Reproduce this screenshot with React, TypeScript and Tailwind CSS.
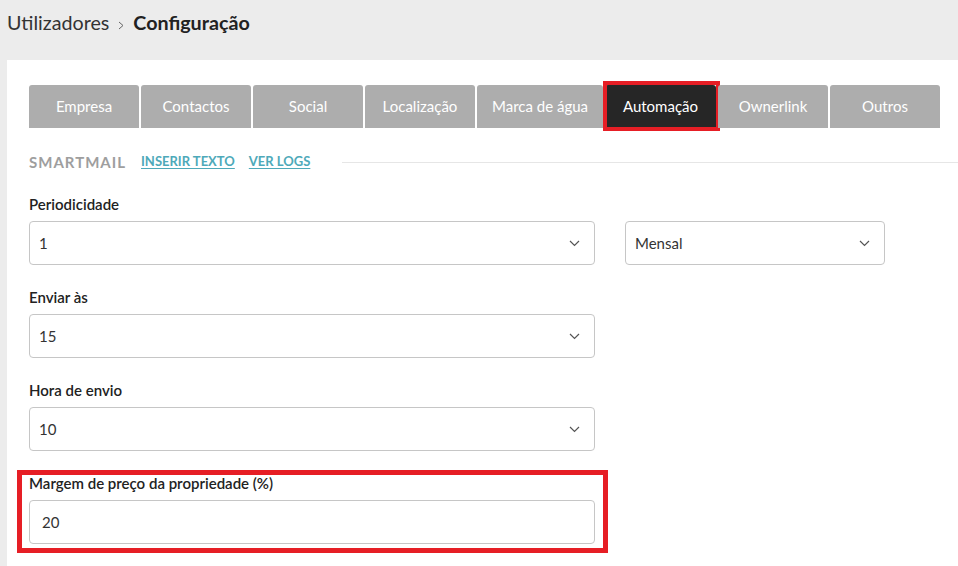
import React from "react";

const TABS: { label: string; width: string; active?: boolean }[] = [
  { label: "Empresa", width: "w-[110px]" },
  { label: "Contactos", width: "w-[110px]" },
  { label: "Social", width: "w-[110px]" },
  { label: "Localização", width: "w-[110px]" },
  { label: "Marca de água", width: "w-[126px]" },
  { label: "Automação", width: "w-[111px]", active: true },
  { label: "Ownerlink", width: "w-[110px]" },
  { label: "Outros", width: "w-[110px]" },
];

function Chevron() {
  return (
    <svg width="11" height="7" viewBox="0 0 11 7" aria-hidden>
      <polyline
        points="1,1 5.5,5.5 10,1"
        fill="none"
        stroke="#555"
        strokeWidth="1.2"
      />
    </svg>
  );
}

function SelectBox(props: { value: string; width: string }) {
  return (
    <div
      className={`${props.width} h-[44px] border border-[#c6c6c6] rounded-[4px] bg-white pl-[9px] pr-[14px] flex items-center justify-between text-[15px] text-[#333]`}
    >
      <span>{props.value}</span>
      <Chevron />
    </div>
  );
}

function Label(props: { children: React.ReactNode }) {
  return (
    <div className="text-[15px] leading-[18px] font-semibold text-[#222] mb-[8px]">
      {props.children}
    </div>
  );
}

export default function App() {
  return (
    <div className="min-h-screen bg-[#ececec] font-['Lato','Open_Sans',sans-serif]">
      {/* breadcrumb */}
      <div className="h-[60px] pl-[7px] pt-[10px] flex items-start">
        <div className="flex items-center h-[26px] text-[19.7px] text-[#333]">
          <span>Utilizadores</span>
          <svg width="6" height="9" viewBox="0 0 6 9" className="mx-[9px] mt-[5px]" aria-hidden>
            <polyline points="1,1 5,4.5 1,8" fill="none" stroke="#666" strokeWidth="1" />
          </svg>
          <span className="font-bold text-[#222]">Configuração</span>
        </div>
      </div>

      {/* panel */}
      <div className="ml-[7px] bg-white min-h-[506px] pt-[25px] pl-[22px]">
        <div className="flex gap-[2px]">
          {TABS.map((t) => (
            <div
              key={t.label}
              className={`relative ${t.width} h-[43px] rounded-t-[3px] flex items-center justify-center text-[15px] ${
                t.active ? "bg-[#262626] text-white" : "bg-[#adadad] text-white"
              }`}
            >
              {t.label}
              {t.active && (
                <div className="absolute -left-[2px] -right-[4px] -top-[4px] -bottom-[3px] border-[4px] border-[#e61e25]" />
              )}
            </div>
          ))}
        </div>

        <div className="mt-[24px] h-[20px] flex items-center">
          <span className="text-[15px] font-bold tracking-[1px] text-[#9e9e9e]">SMARTMAIL</span>
          <a className="ml-[15px] text-[13px] font-bold text-[#4ea9b9] underline underline-offset-2">
            INSERIR TEXTO
          </a>
          <a className="ml-[14px] text-[13px] font-bold text-[#4ea9b9] underline underline-offset-2">
            VER LOGS
          </a>
          <div className="ml-[32px] flex-1 h-px bg-[#e6e6e6]" />
        </div>

        <div className="mt-[23px] flex flex-col gap-[23px]">
          <div>
            <Label>Periodicidade</Label>
            <div className="flex gap-[30px]">
              <SelectBox value="1" width="w-[566px]" />
              <SelectBox value="Mensal" width="w-[260px]" />
            </div>
          </div>
          <div>
            <Label>Enviar às</Label>
            <SelectBox value="15" width="w-[566px]" />
          </div>
          <div>
            <Label>Hora de envio</Label>
            <SelectBox value="10" width="w-[566px]" />
          </div>
          <div className="relative w-[566px]">
            <Label>Margem de preço da propriedade (%)</Label>
            <div className="w-[566px] h-[44px] border border-[#c6c6c6] rounded-[4px] pl-[12px] flex items-center text-[15px] text-[#333]">
              20
            </div>
            <div className="absolute -left-[12px] -right-[13px] -top-[4px] -bottom-[9px] border-[5px] border-[#e61e25]" />
          </div>
        </div>
      </div>
    </div>
  );
}
